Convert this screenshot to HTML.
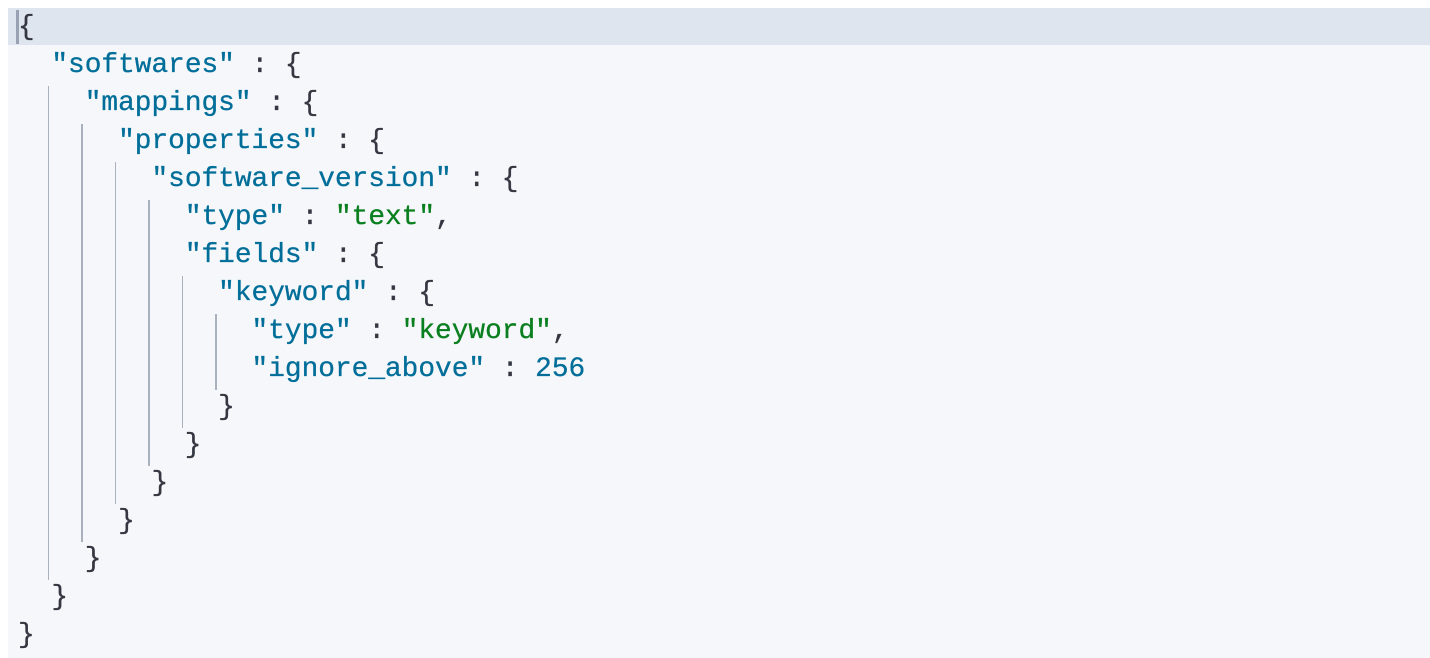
<!DOCTYPE html>
<html><head><style>
html,body{margin:0;padding:0;background:#fff;width:1430px;height:658px;overflow:hidden}
#p{position:absolute;left:8px;top:8px;width:1422px;height:650px;background:#f5f7fa}
#hl{position:absolute;left:0;top:0;width:1422px;height:37px;background:#dfe5ef}
#cur{position:absolute;left:8px;top:2px;width:3px;height:34px;background:#98a2b3}
.l{position:absolute;left:10px;height:38px;line-height:38px;font-family:"Liberation Mono",monospace;font-size:27.8px;color:#343741;white-space:pre;-webkit-text-stroke:0.3px currentColor}
.k{color:#006e99}.s{color:#0a7f1f}.n{color:#006e99}
.g{position:absolute;width:1.5px;background:#a9b1bf}
</style></head><body><div id="p"><div id="hl"></div><div id="cur"></div>
<div class="l" style="top:1px">{</div>
<div class="l" style="top:39px">  <span class="k">"softwares"</span> : {</div>
<div class="l" style="top:77px">    <span class="k">"mappings"</span> : {</div>
<div class="l" style="top:115px">      <span class="k">"properties"</span> : {</div>
<div class="l" style="top:153px">        <span class="k">"software_version"</span> : {</div>
<div class="l" style="top:191px">          <span class="k">"type"</span> : <span class="s">"text"</span>,</div>
<div class="l" style="top:229px">          <span class="k">"fields"</span> : {</div>
<div class="l" style="top:267px">            <span class="k">"keyword"</span> : {</div>
<div class="l" style="top:305px">              <span class="k">"type"</span> : <span class="s">"keyword"</span>,</div>
<div class="l" style="top:343px">              <span class="k">"ignore_above"</span> : <span class="n">256</span></div>
<div class="l" style="top:381px">            }</div>
<div class="l" style="top:419px">          }</div>
<div class="l" style="top:457px">        }</div>
<div class="l" style="top:495px">      }</div>
<div class="l" style="top:533px">    }</div>
<div class="l" style="top:571px">  }</div>
<div class="l" style="top:609px">}</div>
<div class="g" style="left:39.5px;top:78px;height:494px"></div>
<div class="g" style="left:73px;top:116px;height:418px"></div>
<div class="g" style="left:106.5px;top:154px;height:342px"></div>
<div class="g" style="left:140px;top:192px;height:266px"></div>
<div class="g" style="left:173.5px;top:268px;height:152px"></div>
<div class="g" style="left:207px;top:306px;height:76px"></div>
</div></body></html>
